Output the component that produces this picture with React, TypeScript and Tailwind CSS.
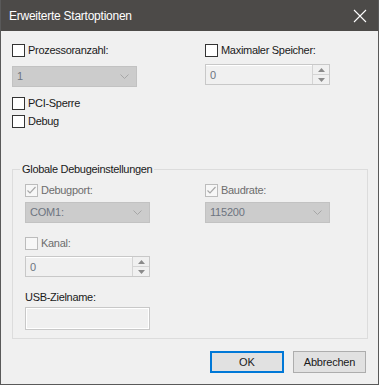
import React from 'react';

const FONT = { fontFamily: '"Liberation Sans", Arial, sans-serif' };

type CheckProps = {
  label: string;
  checked?: boolean;
  disabled?: boolean;
};

const Check: React.FC<CheckProps> = ({ label, checked, disabled }) => (
  <div className="flex h-[13px] items-center gap-[3px]">
    <span
      className={`flex h-[13px] w-[13px] shrink-0 items-center justify-center border ${
        disabled ? 'border-[#bcbcbc] bg-[#f7f7f7]' : 'border-[#333333] bg-white'
      }`}
    >
      {checked && (
        <svg width="11" height="11" viewBox="0 0 11 11">
          <path d="M1.5 5.5 L4 8 L9.5 2" fill="none" stroke="#a8a8a8" strokeWidth="1.2" />
        </svg>
      )}
    </span>
    <span
      className={`text-[11px] leading-[13px] tracking-[-0.3px] ${disabled ? 'text-[#6d6d6d]' : 'text-[#1a1a1a]'}`}
    >
      {label}
    </span>
  </div>
);

const Select: React.FC<{ value: string }> = ({ value }) => (
  <div className="flex h-[21px] w-[125px] items-center justify-between border border-[#c2c2c2] bg-[#cccccc] pl-[4px] pr-[7px]">
    <span className="text-[11px] leading-none tracking-[-0.2px] text-[#6d7480]">{value}</span>
    <svg width="9" height="5" viewBox="0 0 9 5">
      <path d="M0.5 0.5 L4.5 4.5 L8.5 0.5" fill="none" stroke="#a6a6a6" strokeWidth="1" />
    </svg>
  </div>
);

const Spinner: React.FC<{ value: string }> = ({ value }) => (
  <div className="flex h-[21px] w-[125px] border border-[#c8c8c8] bg-[#f0f0f0]">
    <div className="flex flex-1 items-center border-t border-white pl-[4px] text-[11px] leading-none text-[#6d7480]">
      {value}
    </div>
    <div className="flex w-[17px] flex-col border-l border-[#d4d4d4]">
      <div className="flex flex-1 items-center justify-center border-b border-[#d4d4d4]">
        <svg width="7" height="4" viewBox="0 0 7 4">
          <path d="M0 4 L3.5 0 L7 4 Z" fill="#8a8a8a" />
        </svg>
      </div>
      <div className="flex flex-1 items-center justify-center">
        <svg width="7" height="4" viewBox="0 0 7 4">
          <path d="M0 0 L3.5 4 L7 0 Z" fill="#8a8a8a" />
        </svg>
      </div>
    </div>
  </div>
);

export default function App() {
  return (
    <div style={FONT} className="flex h-[385px] w-[379px] flex-col border-x border-b border-[#595959] bg-[#f0f0f0]">
      <div className="flex h-[31px] shrink-0 items-center justify-between bg-[#4c4a48] pl-[8px] pr-[11px]">
        <span className="text-[12px] tracking-[-0.25px] text-white">Erweiterte Startoptionen</span>
        <svg width="14" height="14" viewBox="0 0 14 14">
          <path d="M1 1 L13 13 M13 1 L1 13" stroke="#ffffff" strokeWidth="1.1" />
        </svg>
      </div>

      <div className="flex flex-1 flex-col pl-[11px] pr-[11px]">
        <div className="mt-[13px] grid grid-cols-[193px_1fr]">
          <div className="flex flex-col">
            <Check label="Prozessoranzahl:" />
            <div className="mt-[9px]">
              <Select value="1" />
            </div>
          </div>
          <div className="flex flex-col">
            <Check label="Maximaler Speicher:" />
            <div className="mt-[7px]">
              <Spinner value="0" />
            </div>
          </div>
        </div>

        <div className="mt-[10px]">
          <Check label="PCI-Sperre" />
        </div>
        <div className="mt-[5px]">
          <Check label="Debug" />
        </div>

        <fieldset className="mt-[33px] h-[178px] w-[356px] border border-[#dcdcdc] px-[12px] pb-0 pt-0">
          <legend className="ml-[-5px] px-[2px] text-[11px] leading-[16px] tracking-[-0.3px] text-[#1a1a1a]">
            Globale Debugeinstellungen
          </legend>
          <div className="mt-[7px] grid grid-cols-[180px_1fr]">
            <div className="flex flex-col">
              <Check label="Debugport:" checked disabled />
              <div className="mt-[5px]">
                <Select value="COM1:" />
              </div>
            </div>
            <div className="flex flex-col">
              <Check label="Baudrate:" checked disabled />
              <div className="mt-[5px]">
                <Select value="115200" />
              </div>
            </div>
          </div>
          <div className="mt-[14px]">
            <Check label="Kanal:" disabled />
          </div>
          <div className="mt-[6px]">
            <Spinner value="0" />
          </div>
          <div className="mt-[14px] text-[11px] leading-[13px] tracking-[-0.3px] text-[#1a1a1a]">USB-Zielname:</div>
          <div className="mt-[3px] h-[23px] w-[125px] border border-[#c8c8c8] bg-[#f0f0f0]">
            <div className="h-full border border-white" />
          </div>
        </fieldset>

        <div className="mt-[12px] flex justify-end gap-[9px] pr-[1px]">
          <button className="h-[22px] w-[74px] border-2 border-[#0078d7] bg-[#e1e1e1] text-[11px] text-[#1a1a1a]">
            OK
          </button>
          <button className="h-[22px] w-[73px] border border-[#adadad] bg-[#e1e1e1] text-[11px] tracking-[-0.2px] text-[#1a1a1a]">
            Abbrechen
          </button>
        </div>
      </div>
    </div>
  );
}
